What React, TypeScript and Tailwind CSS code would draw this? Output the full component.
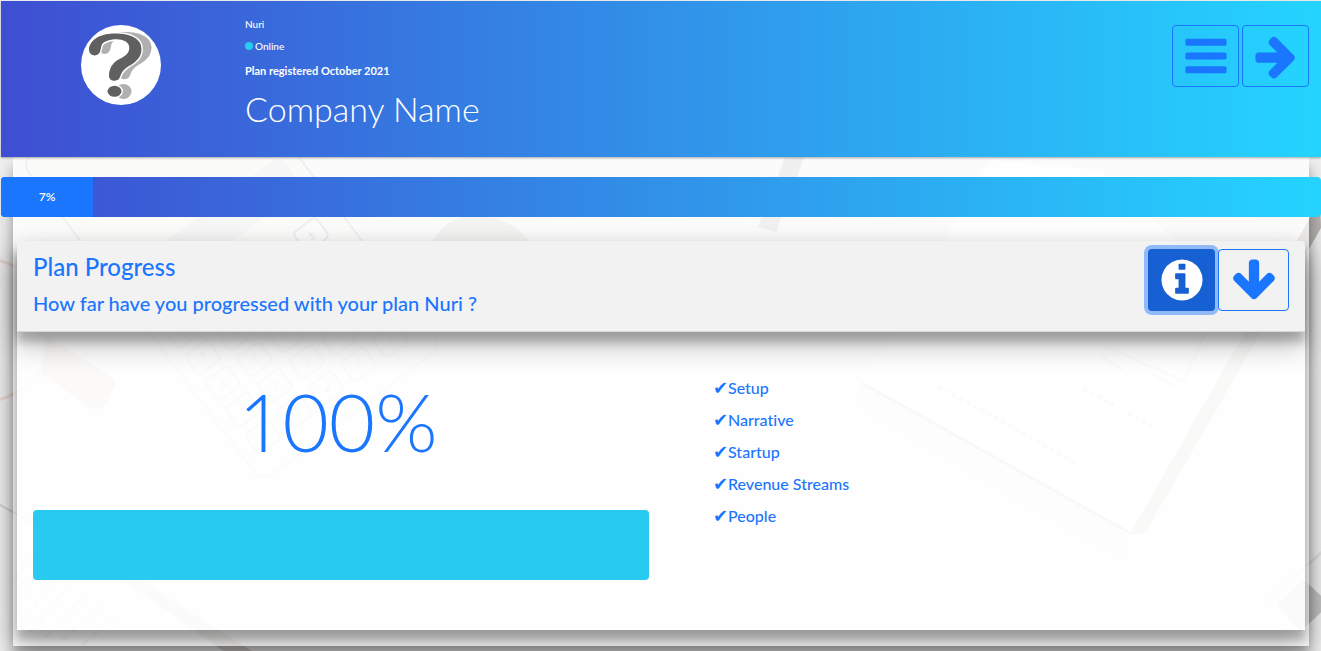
import React from "react";

const ICONS = {
  bars: "M1664 1344v128q0 26-19 45t-45 19h-1408q-26 0-45-19t-19-45v-128q0-26 19-45t45-19h1408q26 0 45 19t19 45zm0-512v128q0 26-19 45t-45 19h-1408q-26 0-45-19t-19-45v-128q0-26 19-45t45-19h1408q26 0 45 19t19 45zm0-512v128q0 26-19 45t-45 19h-1408q-26 0-45-19t-19-45v-128q0-26 19-45t45-19h1408q26 0 45 19t19 45z",
  arrowRight:
    "M1600 960q0 54-37 91l-651 651q-39 37-91 37-51 0-90-37l-75-75q-38-38-38-91t38-91l293-293h-704q-52 0-84.500-37.500t-32.500-90.500v-128q0-53 32.500-90.500t84.500-37.500h704l-293-294q-38-36-38-90t38-90l75-75q38-38 90-38 53 0 91 38l651 651q37 35 37 90z",
  arrowDown:
    "M1675 832q0 53-37 90l-651 652q-39 37-91 37-53 0-90-37l-651-652q-38-36-38-90 0-53 38-91l74-75q39-37 91-37 53 0 90 37l294 294v-704q0-52 38-90t90-38h128q52 0 90 38t38 90v704l294-294q37-37 90-37 52 0 91 37l75 75q37 39 37 91z",
  info: "M1152 1376v-160q0-14-9-23t-23-9h-96v-512q0-14-9-23t-23-9h-320q-14 0-23 9t-9 23v160q0 14 9 23t23 9h96v320h-96q-14 0-23 9t-9 23v160q0 14 9 23t23 9h448q14 0 23-9t9-23zm-128-896v-160q0-14-9-23t-23-9h-192q-14 0-23 9t-9 23v160q0 14 9 23t23 9h192q14 0 23-9t9-23zm640 416q0 209-103 385.500t-279.500 279.500-385.500 103-385.500-103-279.500-279.500-103-385.500 103-385.500 279.500-279.500 385.500-103 385.500 103 279.500 279.500 103 385.500z",
};

function Icon({ d }: { d: string }) {
  return (
    <svg viewBox="0 0 1792 1792" className="size-12 shrink-0 fill-current" aria-hidden="true">
      <path d={d} />
    </svg>
  );
}

const MARK =
  "M8 24C8.500 17 16 8.500 34 8.500C50 8.500 60.500 14 60.500 24C60.500 33 54 37.500 48 41C40 46 40.500 49 38.500 53C36.500 57 28.500 57 28 51C28 46 29.500 41 34 37C38.500 33 48.300 31 48.300 23C48.300 17 42 14.300 35.700 14.300C28 14.300 22 17 20.700 20C19.500 23 20 26.500 17.500 29C14 32 7.500 30 8 24Z";

function Avatar() {
  return (
    <svg viewBox="0 0 80 80" className="size-20 rounded-full bg-white" aria-hidden="true">
      <g fill="#b0b0b0">
        <path d={MARK} transform="translate(10 -1.500)" />
        <ellipse cx="42.500" cy="66.500" rx="8" ry="7.500" />
      </g>
      <g fill="#606060" stroke="#fff" strokeWidth="3" paintOrder="stroke">
        <path d={MARK} />
        <ellipse cx="33.500" cy="66.300" rx="7" ry="5.500" />
      </g>
    </svg>
  );
}

const KEY_ROWS = [
  ["C", "÷", "×", "−", "±"],
  ["7", "8", "9", "+", "√"],
  ["4", "5", "6", "%", "M"],
  ["1", "2", "3", "=", "R"],
  ["0", "0", "•", "=", "+"],
];

function DeskBackdrop() {
  return (
    <svg
      viewBox="0 0 1321 651"
      preserveAspectRatio="xMidYMid slice"
      className="absolute inset-0 -z-10 size-full bg-[#f2f2f2]"
      aria-hidden="true"
    >
      <circle cx="-20" cy="330" r="72" fill="none" stroke="#ecdcd7" strokeWidth="3" />
      <path d="M45 335L112 377Q117 381 114 388L105 404Q100 412 91 408L42 374Z" fill="#e0c4be" />
      <g transform="translate(262 482) rotate(-37)">
        <rect x="0" y="-400" width="225" height="400" rx="12" fill="#f0f0ef" stroke="#cccbca" strokeWidth="2" />
        <rect x="14" y="-250" width="196" height="40" rx="8" fill="#e2e1df" />
        {KEY_ROWS.map((row, r) =>
          row.map((k, c) => {
            const x = 28 + c * 40;
            const y = -168 + r * 33;
            return (
              <g key={`${r}-${c}`}>
                <rect x={x - 14} y={y - 12} width="28" height="24" rx="4" fill="#f6f6f6" stroke="#c8c7c6" strokeWidth="2" />
                <text x={x} y={y + 5} textAnchor="middle" fontSize="13" fill="#b8b7b6" fontFamily="Lato, sans-serif">
                  {k}
                </text>
              </g>
            );
          }),
        )}
      </g>
      <path d="M430 246Q445 215 475 216Q515 217 532 246Z" fill="#d8d5d3" />
      <path d="M786 155L805 155L776 232L758 227Z" fill="#cecece" />
      <path d="M862 384L1130 533L1260 320L1100 170L990 160Z" fill="#fcfcfc" />
      <path d="M862 382L1130 533L1125 562L862 410Z" fill="#e6e6e6" opacity=".5" />
      <path d="M862 383L1130 533" stroke="#b4b3b2" strokeWidth="3" />
      <path d="M1130 534L1320 200L1321 228L1148 528Q1142 537 1130 534Z" fill="#b9b5b1" />
      <path d="M938 386L1078 464M1083 388L1114 405M1128 413L1152 426" stroke="#d2d2d2" strokeWidth="4" strokeDasharray="5 3" />
      <path d="M1107 347L1183 381L1205 335M1100 355L1123 370M1151 373L1173 386" fill="none" stroke="#d6d6d6" strokeWidth="3" />
      <path d="M1277 604L1303 579L1330 604L1300 632Z" fill="#c4c4c4" />
      <path d="M1265 602L1330 545" stroke="#e2e2e2" strokeWidth="3" />
      <path d="M-5 502L34 524M122 578L136 578L250 651H225Z" fill="#d6d2cd" stroke="#d6d2cd" strokeWidth="2" />
      <g stroke="#dad9d8" strokeWidth="3" strokeDasharray="8 4">
        <path d="M15 580L32 555M18 605L45 562M20 627L60 568M30 632L70 585M45 638L84 597M62 640L100 607M82 645L118 616" />
      </g>
    </svg>
  );
}

const outline =
  "flex h-[62px] items-center justify-center rounded border border-[#1a75ff] text-[#1a75ff] hover:bg-[#1a75ff]/10";

const steps = ["Setup", "Narrative", "Startup", "Revenue Streams", "People"];

export default function App() {
  return (
    <div className="relative isolate min-h-screen overflow-hidden pt-px pl-px font-['Lato',sans-serif] font-medium text-[#1a75ff] [font-variant-ligatures:none]">
      <DeskBackdrop />

      <header className="relative z-10 grid min-h-[156px] grid-cols-12 bg-linear-to-r/srgb from-[#3e4ed2] to-[#24d4ff] px-3 shadow-[0_1px_3px_rgba(0,0,0,0.12),0_1px_2px_rgba(0,0,0,0.24)]">
        <div className="col-span-2 flex items-start justify-center pt-6">
          <Avatar />
        </div>
        <div className="col-span-7 flex flex-col items-start pt-[15px] pl-4 text-white">
          <p className="text-[10px] leading-4">Nuri</p>
          <p className="mt-1.5 flex items-center gap-0.5 text-[10px] leading-4">
            <span className="size-2 rounded-full bg-[#28caf0]" />
            Online
          </p>
          <p className="mt-[9px] text-[11px] leading-4 font-bold">Plan registered October 2021</p>
          <h1 className="mt-2 text-[34px] leading-[44px] font-light">Company Name</h1>
        </div>
        <nav className="col-span-3 flex items-start justify-end gap-[3px] pt-6">
          <button type="button" aria-label="Menu" className={`${outline} w-[67px]`}>
            <Icon d={ICONS.bars} />
          </button>
          <button type="button" aria-label="Next" className={`${outline} w-[67px]`}>
            <Icon d={ICONS.arrowRight} />
          </button>
        </nav>
      </header>

      <main className="mx-3 bg-white/70 pt-5 pb-4 shadow-[0_14px_28px_rgba(0,0,0,0.25),0_10px_10px_rgba(0,0,0,0.22)]">
        <div className="relative -mx-3 h-10 overflow-hidden rounded bg-linear-to-r/srgb from-[#3e4ed2] to-[#24d4ff]">
          <div className="flex h-full w-[7%] items-center justify-center bg-[#1a75ff] text-xs font-semibold text-white">7%</div>
        </div>

        <section className="mx-1 mt-6 rounded-t-sm bg-white/70 shadow-[0_14px_28px_rgba(0,0,0,0.25),0_10px_10px_rgba(0,0,0,0.22)]">
          <div className="flex items-start justify-between rounded-t-sm border-b border-[#d8d8d8] bg-[#f2f2f2] px-4 pt-2 pb-[15px] shadow-[0_14px_28px_rgba(0,0,0,0.25),0_10px_10px_rgba(0,0,0,0.22)]">
            <div className="pt-1">
              <h2 className="text-2xl leading-7">Plan Progress</h2>
              <h3 className="mt-[9px] text-xl leading-[26px]">How far have you progressed with your plan Nuri ?</h3>
            </div>
            <div className="flex gap-[3px]">
              <button
                type="button"
                aria-label="Information"
                className="flex h-[62px] w-[67px] items-center justify-center rounded bg-[#1760d3] text-white ring-4 ring-[#1a75ff]/45"
              >
                <Icon d={ICONS.info} />
              </button>
              <button type="button" aria-label="Expand" className={`${outline} w-[71px]`}>
                <Icon d={ICONS.arrowDown} />
              </button>
            </div>
          </div>

          <div className="grid grid-cols-2 gap-6 px-4 pt-11 pb-[50px]">
            <div>
              <p className="text-center text-[80px] leading-[90px] font-light">
                <span className="pr-2 proportional-nums">1</span>
                <span>00%</span>
              </p>
              <div className="mt-11 h-[70px] rounded bg-[#28caf0]" role="progressbar" aria-label="Plan progress" aria-valuenow={100} />
            </div>
            <ul className="space-y-2 pl-10 text-base">
              {steps.map((s) => (
                <li key={s} className="flex items-center">
                  <span className="w-[15px] font-['DejaVu_Sans',sans-serif] text-lg leading-6">✔</span>
                  {s}
                </li>
              ))}
            </ul>
          </div>
        </section>
      </main>
    </div>
  );
}
